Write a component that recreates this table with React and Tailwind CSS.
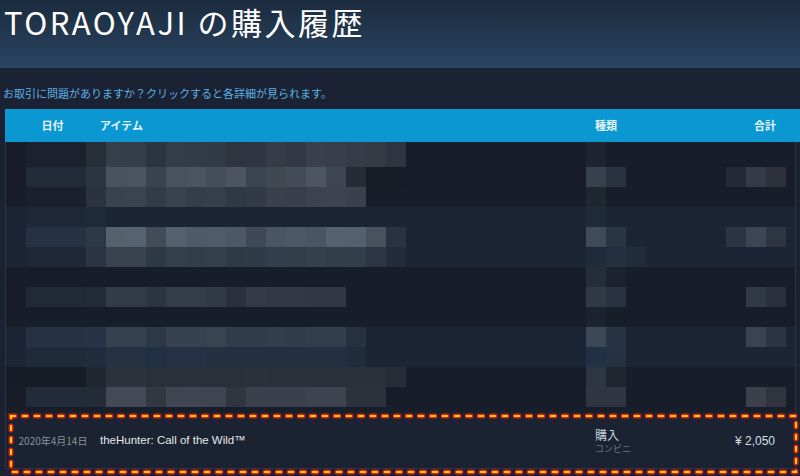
import React from 'react';

// pixelated (mosaic) rows of the purchase list — each band is 20px tall,
// cells are 20px wide columns counted from the table's left edge
const BANDS = [
  { h: 25, bg: '#171e29', cells: [[1, ['#1b222d', '#1b222d', '#1b222d', '#262e38', '#363e49', '#353d48', '#2c343f', '#343c47', '#333b46', '#323a45', '#2e353f', '#2f3641', '#353c47', '#323944', '#3a414c', '#393f4a', '#363c47', '#353b45', '#2f3540']], [29, ['#1e2530']]] },
  { h: 20, bg: '#171e29', cells: [[1, ['#222b38', '#222b38', '#222b38', '#2c343f', '#4a525d', '#4b535e', '#3a424d', '#48515c', '#4a535e', '#454d58', '#4b545f', '#3b434e', '#404852', '#434b56', '#4d5660', '#3d4550', '#262c35', '#161d27', '#161d27']], [29, ['#36414d', '#2a3440']], [36, ['#232a35', '#343b46', '#2c313c']]] },
  { h: 20, bg: '#171e29', cells: [[1, ['#1a212c', '#1a212c', '#1a212c', '#2b333e', '#3a424d', '#3b434e', '#333b46', '#3a424d', '#353d48', '#363e49', '#303844', '#323a45', '#3a414c', '#383f4a', '#3c434e', '#3d444f', '#3a414c']], [29, ['#1f2731']]] },
  { h: 20, bg: '#1c2535', cells: [[1, ['#1e2839', '#1e2839', '#1e2839', '#1f2a3a']], [29, ['#1f2a3a']]] },
  { h: 20, bg: '#1c2535', cells: [[1, ['#263243', '#263243', '#263243', '#2d3846', '#56616e', '#56626f', '#414c58', '#53606e', '#4e5a67', '#4f5b69', '#4c5866', '#3e4856', '#4a5564', '#4d5867', '#4a5563', '#56616f', '#55606e', '#48525f', '#283241']], [29, ['#3f4b59', '#2a3544']], [36, ['#2b3443', '#3b4553', '#2d3541']]] },
  { h: 20, bg: '#1c2535', cells: [[1, ['#1f2837', '#1f2837', '#1f2837', '#2a3442', '#38434f', '#38434f', '#2e3946', '#35404d', '#333e4b', '#34404c', '#2f3a47', '#303b48', '#333e4c', '#323d4a', '#35404d', '#323d4a', '#333e4b', '#2b3543', '#222c3b']], [29, ['#1f2a3a', '#243040', '#202b3b']]] },
  { h: 20, bg: '#171e29', cells: [[29, ['#242d38', '#1c232e']]] },
  { h: 20, bg: '#171e29', cells: [[1, ['#202935', '#202935', '#202935', '#222b37', '#333b47', '#333b47', '#2c343f', '#343c48', '#343c48', '#323a46', '#2a313c', '#343a46', '#323945', '#323945', '#313844', '#313844']], [29, ['#2f3945', '#283240']], [37, ['#313945', '#2b313c']]] },
  { h: 20, bg: '#171e29', cells: [[29, ['#1c232e']]] },
  { h: 20, bg: '#1c2535', cells: [[1, ['#263244', '#263244', '#263244', '#283446', '#35414f', '#35414f', '#2d3846', '#364250', '#364250', '#38444f', '#313c4a', '#313c4a', '#323d4b', '#313c4a', '#333e4c', '#333e4c', '#263142']], [29, ['#3c4858', '#283343']], [37, ['#394352', '#2a3442']]] },
  { h: 20, bg: '#1c2535', cells: [[1, ['#1f2a3a', '#1f2a3a', '#1f2a3a', '#212c3c', '#263244', '#263244', '#223043', '#253144', '#253144', '#243042', '#223042', '#243042', '#243042', '#223042', '#243042', '#243042', '#212c3d']], [29, ['#223043', '#243244']]] },
  { h: 20, bg: '#171e29', cells: [[0, ['#161c26', '#161c26', '#161c26', '#161c26', '#202731', '#2c323c', '#2c323c', '#2a3039', '#2a3039', '#2b313a', '#2a3039', '#2a3039', '#2b313a', '#2a3039', '#2a3039', '#2b313a', '#2a3039', '#2a3039', '#2a3039', '#272d36']], [29, ['#2c3540', '#20262f']]] },
  { h: 20, bg: '#171e29', cells: [[1, ['#222b39', '#222b39', '#222b39', '#242c38', '#434a55', '#434a55', '#313842', '#3f4651', '#3f4651', '#3e4550', '#2f3640', '#3a414c', '#3a414c', '#3a414c', '#3d444f', '#3d444f', '#2c323c', '#2c323c']], [29, ['#2f3642', '#2f3642']], [37, ['#3b404b', '#2f343f']]] },
];

const COLS = 40;

const Band = ({ band }) => {
  const map = {};
  band.cells.forEach(([start, colors]) => {
    colors.forEach((c, i) => { map[start + i] = c; });
  });
  return (
    <div className="flex" style={{ height: band.h, backgroundColor: band.bg }}>
      {Array.from({ length: COLS }).map((_, i) => (
        <div
          key={i}
          className="w-[20px] shrink-0 h-full"
          style={map[i] ? { backgroundColor: map[i] } : undefined}
        />
      ))}
    </div>
  );
};

const App = () => {
  return (
    <div className="w-[800px] h-[476px] overflow-hidden bg-[#1b2130] font-['Noto_Sans_CJK_JP',sans-serif]">
      {/* Page header */}
      <div className="h-[68px] bg-gradient-to-b from-[#1b2b3e] to-[#2a4561] px-[4px] pt-[4px]">
        <h1 className="text-[31px] leading-[36px] font-normal tracking-[2.5px] text-white">
          TORAOYAJI の購入履歴
        </h1>
      </div>

      <div className="bg-gradient-to-b from-[#1a2233] to-[#1b2130]">
        <p className="pt-[17px] pl-[3px] text-[11px] leading-[16px] text-[#5fb1e4]">
          お取引に問題がありますか？クリックすると各詳細が見られます。
        </p>

        {/* Table */}
        <div className="mt-[8px] ml-[5px]">
          <div className="flex items-center h-[33px] bg-[#0b98d2] text-[11px] font-bold text-[#e6f5fc]">
            <div className="w-[95px] text-center">日付</div>
            <div className="w-[495px]">アイテム</div>
            <div className="w-[159px]">種類</div>
            <div>合計</div>
          </div>

          <div className="w-[791px] border-l border-r border-[#2a3543]">
            {BANDS.map((b, i) => (
              <Band key={i} band={b} />
            ))}
            <div className="h-[6px] bg-[#171e29]" />

            {/* Highlighted purchase */}
            <div className="relative flex items-center h-[56px] bg-[#1b2231] border-b border-[#2a3543]">
              <div className="w-[94px] shrink-0 text-center text-[10px] text-[#8a939c]">2020年4月14日</div>
              <div className="w-[495px] shrink-0 font-['Liberation_Sans',sans-serif] text-[11.5px] text-[#e3e8ec]">
                theHunter: Call of the Wild™
              </div>
              <div className="w-[140px] shrink-0 flex flex-col">
                <span className="text-[12px] leading-[15px] text-[#c6d4df]">購入</span>
                <span className="text-[9px] leading-[13px] text-[#6b7782]">コンビニ</span>
              </div>
              <div className="flex-1 whitespace-nowrap text-right pr-[21px] font-['Liberation_Sans',sans-serif] text-[12px] text-[#d6dee4]">
                ¥ 2,050
              </div>

              <svg
                className="absolute left-0 top-0 pointer-events-none overflow-visible"
                width="791"
                height="66"
              >
                <rect
                  x="5"
                  y="3"
                  width="785"
                  height="56"
                  fill="none"
                  stroke="#e0200d"
                  strokeWidth="5"
                  strokeDasharray="4 8"
                  strokeLinecap="round"
                />
                <rect
                  x="5"
                  y="3"
                  width="785"
                  height="56"
                  fill="none"
                  stroke="#ffd81c"
                  strokeWidth="2"
                  strokeDasharray="4 8"
                  strokeLinecap="round"
                />
              </svg>
            </div>
          </div>
        </div>
      </div>
    </div>
  );
};

export default App;
